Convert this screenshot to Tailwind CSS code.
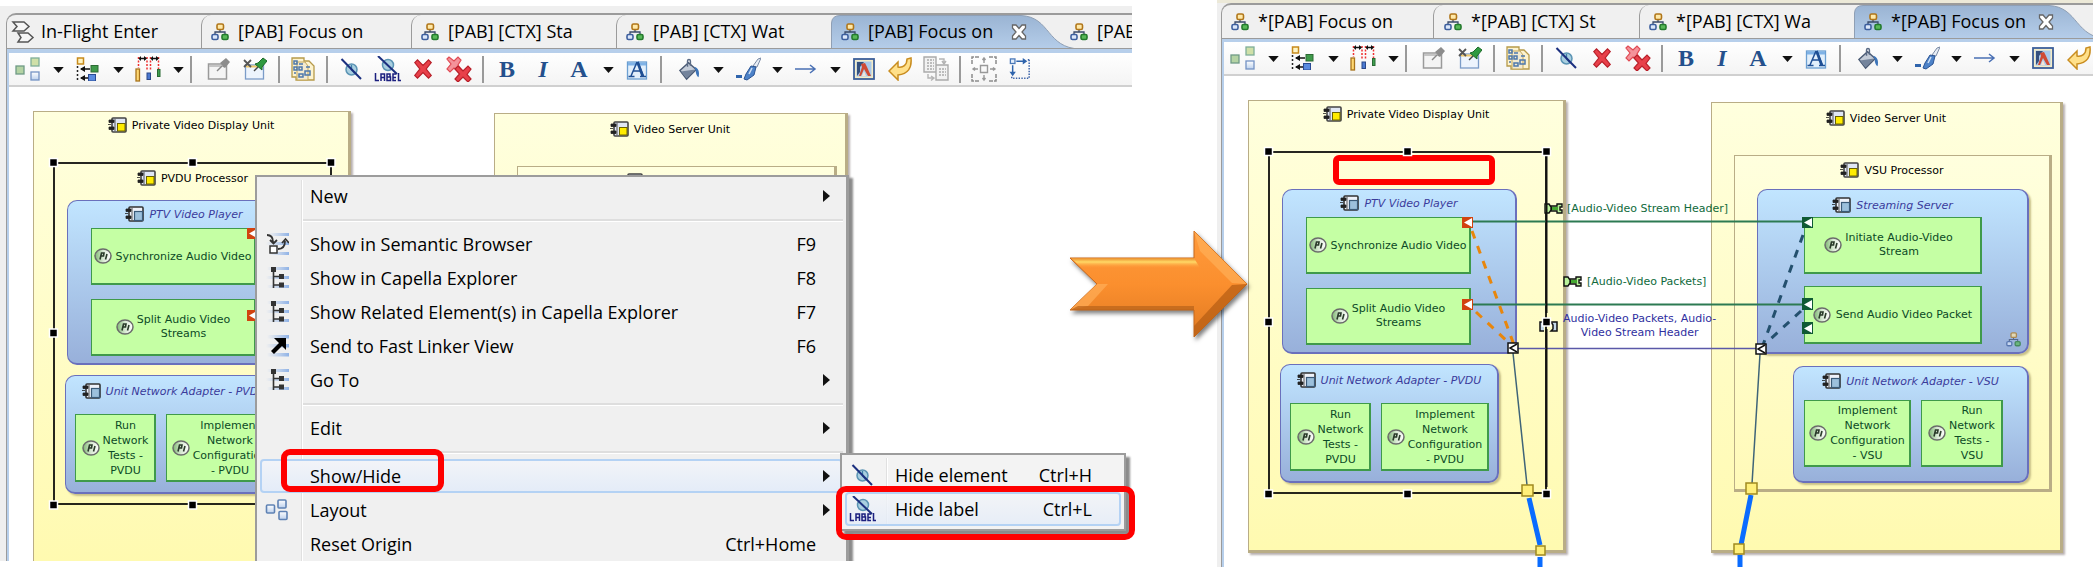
<!DOCTYPE html>
<html lang="en">
<head>
<meta charset="utf-8">
<title>Show/Hide label in diagrams</title>
<script src="https://cdn.jsdelivr.net/npm/@tailwindcss/browser@4"></script>
</head>
<body class="bg-white font-['Open_Sans','Noto_Sans',sans-serif] text-[18px] text-black">

<!-- Icon library -->
<svg class="absolute size-0" aria-hidden="true">
  <defs>
    <linearGradient id="tabBlue" x1="0" y1="0" x2="0" y2="1"><stop offset="0" stop-color="#9ab4d3"/><stop offset="1" stop-color="#b7cfeb"/></linearGradient>
    <linearGradient id="orange" x1="0" y1="0" x2="0" y2="1"><stop offset="0" stop-color="#ff9a3c"/><stop offset=".5" stop-color="#fb8f2e"/><stop offset="1" stop-color="#e07a22"/></linearGradient>
    <linearGradient id="topLight" x1="0" y1="0" x2="0" y2="1"><stop offset="0" stop-color="#e98a2b"/><stop offset=".4" stop-color="#ffd966"/><stop offset="1" stop-color="#ff9a3c" stop-opacity="0"/></linearGradient>
    <linearGradient id="fnFill" x1="0" x2="1"><stop offset="0" stop-color="#7fb873"/><stop offset=".5" stop-color="#d7e8d2"/><stop offset="1" stop-color="#fff"/></linearGradient>
    <linearGradient id="streak" x1="0" x2="1"><stop offset="0" stop-color="#9dbbe8" stop-opacity="0"/><stop offset="1" stop-color="#8fb2e6"/></linearGradient>
    <linearGradient id="blueSq" x1="0" y1="0" x2="0" y2="1"><stop offset="0" stop-color="#fff"/><stop offset="1" stop-color="#bcd0ec"/></linearGradient>
  </defs>
  <symbol id="i-tree" viewBox="0 0 18 18"><path d="M9 6v3M4 12V9h10v3" fill="none" stroke="#3a4a6a" stroke-width="1.3"/><rect x="6" y="1" width="6.500" height="5.500" rx="1.500" fill="#ffe9a8" stroke="#b0761a" stroke-width="1.600"/><rect x="1" y="11.500" width="6" height="5" rx="1.500" fill="#dbe7fa" stroke="#3d5f9e" stroke-width="1.600"/><rect x="11" y="11.500" width="6" height="5" rx="1.500" fill="#58b858" stroke="#237a2c" stroke-width="1.600"/></symbol>
  <symbol id="i-scenario" viewBox="0 0 24 24"><path d="M2 2h11l5 4.500-5 4.500H2l4-4.500zM7 13h10l5 4.500-5 4.500H7l3-4.500z" fill="#f6f6f6" stroke="#555" stroke-width="1.500"/></symbol>
  <symbol id="i-close" viewBox="0 0 16 16"><path d="M1.500 1h3.500l3 3.500L11 1h3.500v3L11 8l3.500 4v3H11L8 11.500 5 15H1.500v-3L5 8 1.500 4z" fill="#fff" stroke="#666" stroke-width="1.300"/></symbol>
  <symbol id="i-caret" viewBox="0 0 12 8"><path d="M0 1h12L6 8z" fill="#111"/></symbol>
  <symbol id="i-arrange" viewBox="0 0 26 24"><rect x="1" y="9" width="8" height="8" fill="#b4d3a4" stroke="#6f9a86" stroke-width="1.300"/><rect x="16" y="1" width="8" height="8" fill="#cfe0a8" stroke="#7fae98" stroke-width="1.300"/><rect x="16" y="15" width="8" height="8" fill="url(#blueSq)" stroke="#7392c4" stroke-width="1.300"/></symbol>
  <symbol id="i-align" viewBox="0 0 24 24"><rect x="1.500" y="1" width="6" height="6" fill="#fff5c4" stroke="#c78a1c" stroke-width="1.500"/><path d="M1.500 9v15" stroke="#222" stroke-width="1.500" stroke-dasharray="2 2"/><path d="M5 12h9M5 21h7" stroke="#111" stroke-width="1.500"/><path d="M9 9v6l-5-3zM9 18v6l-5-3z" fill="#111"/><rect x="15" y="8.500" width="7" height="6.500" fill="#3f9a4a" stroke="#2c6a34"/><rect x="12.500" y="17.500" width="7" height="6.500" fill="#5a8be0" stroke="#2a4a94"/></symbol>
  <symbol id="i-distribute" viewBox="0 0 26 26"><path d="M3.500 1v11M12 1v14M15.500 1v14M23.500 1v12" stroke="#f03030" stroke-width="1.500" stroke-dasharray="2 1.500"/><path d="M4 2.500h7M16 2.500h7" stroke="#111" stroke-width="1.500"/><path d="M9 0v5l3-2.500zM6 0v5L3.500 2.500zM21 0v5l3-2.500zM18 0v5l-2.500-2.500z" fill="#111"/><rect x="1" y="13" width="3.500" height="12" fill="#ffd873" stroke="#a8741c" stroke-width="1.300"/><rect x="12" y="17" width="3.500" height="6.500" fill="#4a78d0" stroke="#2b4888"/><rect x="22.500" y="13.500" width="2.500" height="7" fill="#3fa050" stroke="#2a6a34"/></symbol>
  <symbol id="i-pin" viewBox="0 0 24 24"><rect x="1.500" y="7" width="18" height="15" fill="#f4f4f4" stroke="#9a9a9a" stroke-width="1.500"/><path d="M2 9h17" stroke="#c4c4c4" stroke-width="2"/><path d="M10 14l5-5" stroke="#888" stroke-width="1.500"/><path d="M13 6l6-5 4 4-5 6-2-1-1-2z" fill="#8c8c8c"/></symbol>
  <symbol id="i-unpin" viewBox="0 0 24 24"><rect x="2.500" y="8" width="18" height="14" fill="#edf4fd" stroke="#7b9cc8" stroke-width="1.300"/><path d="M3 9.500h17" stroke="#f0c96a" stroke-width="2"/><path d="M1 3l7 7M8 3l-7 7" stroke="#555" stroke-width="1.800"/><path d="M11 14l4-4" stroke="#444" stroke-width="1.500"/><path d="M12 7l3-1 5-5 4 3-5 6v3z" fill="#2f9a40" stroke="#1d6a2a"/></symbol>
  <symbol id="i-layers" viewBox="0 0 24 24"><path d="M1 1h12v3h5l5 5v14H5v-3H1z" fill="#fdf3cf" stroke="#b69a4a" stroke-width="1.300"/><path d="M6 5h8l3 4v14H6z" fill="#f3ead0" stroke="#c5a95c"/><path d="M3 4h3v3H3zM8 7h4M3 10h3v3H3zM8 10h3v3H8zM3 16h2M8 17h4v3H8zM14 14h5v4h-5zM15 10h4" fill="none" stroke="#4d78ac" stroke-width="1.500"/></symbol>
  <symbol id="i-hide" viewBox="0 0 24 24"><circle cx="12.500" cy="12.500" r="5.500" fill="#a9cfe0" stroke="#5b94b4" stroke-width="1.500"/><path d="M12.500 8v5l3 3" stroke="#3d7fa8" fill="none" stroke-width="1.300"/><path d="M2.500 2l19.500 20" stroke="#1b2f7f" stroke-width="2"/></symbol>
  <symbol id="i-hidelabel" viewBox="0 0 27 26"><circle cx="14" cy="9" r="5.500" fill="#a9cfe0" stroke="#5b94b4" stroke-width="1.500"/><path d="M4 0l19 18" stroke="#1b2f7f" stroke-width="2"/><path d="M1.500 17v7.500h3.500M7 25v-7h3.500v7M7 21.500h3.500M13 18h3v3h-3zM13 21h3.500v3.500H13zM22 18h-3v6.500h3M19 21.500h3M24.500 17v7.500h2.500" fill="none" stroke="#1b1f7f" stroke-width="1.500"/></symbol>
  <symbol id="i-x" viewBox="0 0 24 24"><path d="M3 5l3-3 6 6 6-6 3 3-5.500 7 5.500 7-3 3-6-6-6 6-3-3 5.500-7z" fill="#e8404a" stroke="#b8202a" stroke-width="1.300"/></symbol>
  <symbol id="i-xx" viewBox="0 0 26 26"><path d="M1 3l2-2 5 4 4-4 3 3-3 5 4 5-3 2-5-4-4 4-3-3 4-5z" fill="#f4929a" stroke="#e04a54" stroke-width="1.200"/><path d="M9 13l3-3 5 5 5-5 3 3-4 5.500 4 4.500-3 3-5-5-5 5-3-3 4.500-5z" fill="#e8404a" stroke="#b8202a" stroke-width="1.200"/></symbol>
  <symbol id="i-fontbox" viewBox="0 0 22 24"><rect x="1.500" y="5" width="19" height="17" fill="#e2effb" stroke="#6b9fd2" stroke-width="1.300"/><path d="M2 7h18" stroke="#7fb2e6" stroke-width="3"/><path d="M5 19L11 5M12 5l5.500 14M7.500 14h8M2.500 19.500h6M14 19.500h6" fill="none" stroke="#1f4f94" stroke-width="1.500"/><path d="M11.500 5l5 14" stroke="#1f4f94" stroke-width="2.500"/></symbol>
  <symbol id="i-bucket" viewBox="0 0 24 24"><path d="M3 13l9-8 8 7-10 10z" fill="#c4ccd8" stroke="#4a5a74" stroke-width="1.500"/><path d="M4 14l15-2-9 9z" fill="#74849c"/><path d="M11 9V3c0-2 3-2 3 0v5" fill="none" stroke="#5a6a84" stroke-width="1.500"/><path d="M18 9c4 1 6 5 4.500 11-2-1-3-4-3-7z" fill="#3d74b8"/></symbol>
  <symbol id="i-brush" viewBox="0 0 26 24"><path d="M1 18h6v3H1z" fill="#2f64ac"/><path d="M18 9l5-7 3-1-4 9z" fill="#e8eef6" stroke="#7a8aa4"/><path d="M11 17l5-8 5 1-2 8-7 5-3-1z" fill="#4d82c8" stroke="#2b5494"/><path d="M14 17l3-6" stroke="#cfe0f4" stroke-width="1.500"/></symbol>
  <symbol id="i-line" viewBox="0 0 22 12"><path d="M0 6h20M15 2l5 4-5 4" fill="none" stroke="#4a70b4" stroke-width="1.500"/></symbol>
  <symbol id="i-image" viewBox="0 0 22 22"><rect x="1" y="1" width="20" height="20" fill="#f4ecc8" stroke="#3c5f9a" stroke-width="1.800"/><rect x="3.500" y="3.500" width="15" height="15" fill="#a9c9ea"/><path d="M4 4h7L7 9v5l-3 4z" fill="#34507e"/><path d="M8 6l4-1 2 4 4 9h-3l-4-7-3 7H6l3-9z" fill="#d04a34"/><path d="M11 13l-2 5h4z" fill="#f4e4d8"/></symbol>
  <symbol id="i-back" viewBox="0 0 24 24"><path d="M1 14l9-9v5c5 1 9-2 9-8l4-1c1 10-3 16-13 17v5z" fill="#ffe08a" stroke="#c98d20" stroke-width="1.500"/></symbol>
  <symbol id="i-copy" viewBox="0 0 26 26"><path d="M1 1h12v15H1zM13 9h12v15H13z" fill="#f2f2f2" stroke="#aaa" stroke-width="1.400"/><path d="M4 4h7M4 7h7M4 10h7M4 13h7M16 13h7M16 16h7M16 19h7" stroke="#aaa" stroke-width="1.500" stroke-dasharray="2 1"/><path d="M16 3h5v4M19 5l2 3 2-3M5 18v4h5M8 20l3 2-3 2.500" fill="none" stroke="#b4b4b4" stroke-width="1.400"/></symbol>
  <symbol id="i-fit" viewBox="0 0 26 26"><path d="M1 8V1h7M18 1h7v7M25 18v7h-7M8 25H1v-7" fill="none" stroke="#8c8c8c" stroke-width="1.500" stroke-dasharray="4 1"/><path d="M9.500 9.500h7v7h-7zM13 2v5M13 19v5M2 13h5M19 13h5M11.500 4L13 2l1.500 2M11.500 22l1.500 2 1.500-2M4 11.500L2 13l2 1.500M22 11.500l2 1.500-2 1.500" fill="none" stroke="#999" stroke-width="1.400"/></symbol>
  <symbol id="i-size" viewBox="0 0 24 24"><path d="M8 3.500h9M4 8v9" stroke="#2f64ac" stroke-width="1.600"/><path d="M15 0l5 3.500L15 7zM0.500 15h7L4 20z" fill="#2f64ac"/><rect x="1.500" y="1" width="5" height="5" fill="#e4eefb" stroke="#4a78b8" stroke-width="1.400"/><path d="M22 2v20H3M22 2h-3M3 22v-3" fill="none" stroke="#3a62a8" stroke-width="1.600" stroke-dasharray="1.500 1.500"/></symbol>
  <symbol id="i-comp-y" viewBox="0 0 19 16"><rect x="4" y="1" width="14" height="14" rx="1" fill="#dfe6f4" stroke="#444" stroke-width="1.600"/><path d="M7 2v12" stroke="#555" stroke-width="1"/><rect x="9.500" y="6.500" width="7.500" height="7.500" fill="#ffec00" stroke="#6a6200" stroke-width="1"/><path d="M1 3h5v2.500H1zM1 10h5v2.500H1zM0 7.500h3" fill="#222" stroke="#222" stroke-width=".8"/></symbol>
  <symbol id="i-comp-b" viewBox="0 0 19 16"><rect x="4" y="1" width="14" height="14" rx="1" fill="#eef2fa" stroke="#333" stroke-width="1.600"/><path d="M7 2v12" stroke="#555" stroke-width="1"/><rect x="9.500" y="5.500" width="8" height="9" fill="#9cc0dc" stroke="#3a5a78" stroke-width="1.200"/><path d="M1 3h5v2.500H1zM1 10h5v2.500H1zM0 7.500h3" fill="#222" stroke="#222" stroke-width=".8"/></symbol>
  <symbol id="i-fn" viewBox="0 0 18 16"><ellipse cx="9" cy="8" rx="8" ry="7" fill="url(#fnFill)" stroke="#6b6b6b" stroke-width="1.500"/><path d="M6 11.500L7.500 5h2.500l-.5 3H7M11.500 11.500L13 6" fill="none" stroke="#2a3a2a" stroke-width="1.600"/></symbol>
  <symbol id="i-exch" viewBox="0 0 19 11"><path d="M1 1h4l3 4.500L5 10H1zM18 1h-5v2H7v5h6v2h5V7h-2V4h2z" fill="#b8f09a" stroke="#111" stroke-width="1.400"/><path d="M8 4h6v3H8z" fill="#45a832"/></symbol>
  <symbol id="i-sembrowser" viewBox="0 0 24 24"><rect x="4" y="1" width="20" height="3" fill="url(#streak)"/><rect x="1" y="10" width="23" height="3" fill="url(#streak)"/><rect x="4" y="20" width="20" height="3" fill="url(#streak)"/><rect x="5" y="14" width="7" height="7" fill="#fff" stroke="#333" stroke-width="1.500"/><path d="M2 3c5 0 6 3 6 7M5 8l3.500 3.500L12 8M13 17c5 0 7-3 7-8M17 11l3.500-4L24 11" fill="none" stroke="#333" stroke-width="1.800"/></symbol>
  <symbol id="i-explorer" viewBox="0 0 24 24"><rect x="2" y="1" width="22" height="3" fill="url(#streak)"/><rect x="1" y="10" width="23" height="3" fill="url(#streak)"/><rect x="2" y="19" width="22" height="3" fill="url(#streak)"/><path d="M8.500 4v18M8.500 10.500h7M8.500 19h7" stroke="#333" stroke-width="1.600" fill="none"/><path d="M6 1h5v5H6zM14 8h5v5h-5zM14 16.500h5v5h-5z" fill="#333"/></symbol>
  <symbol id="i-linker" viewBox="0 0 24 24"><rect x="2" y="1" width="22" height="3.500" fill="url(#streak)"/><rect x="1" y="10" width="23" height="3.500" fill="url(#streak)"/><rect x="2" y="19" width="22" height="3.500" fill="url(#streak)"/><path d="M9 4h12v12l-4-4-8 8-3-3 8-8z" fill="#000"/></symbol>
  <symbol id="i-layout" viewBox="0 0 24 24"><g fill="url(#blueSq)" stroke="#5f82b4" stroke-width="1.600"><rect x="1.500" y="7" width="8" height="8" rx="1"/><rect x="13" y="2" width="8" height="8" rx="1"/><rect x="14" y="13.500" width="8" height="8" rx="1"/></g></symbol>
  <symbol id="i-sub" viewBox="0 0 7 12"><path d="M0 0l7 6-7 6z" fill="#111"/></symbol>
</svg>

<main class="relative grid h-screen grid-cols-[1132fr_85fr_876fr] overflow-hidden">

  <!-- Before: context menu open -->
  <section class="relative mb-[6px] flex flex-col overflow-hidden bg-[#efefef] pl-[6px]">
    <div class="-ml-[6px] h-[6px] shrink-0 bg-white"></div>
    <div class="h-[7px] shrink-0"></div>
    <div role="tablist" class="flex h-[36px] shrink-0 overflow-hidden rounded-tl-[10px] border-t-2 border-b border-l border-[#9b9b9b] bg-[#f0f0f0] whitespace-nowrap">
      <button role="tab" class="flex w-[194px] items-center gap-[6px] pl-[4px]"><svg class="size-[24px]"><use href="#i-scenario"/></svg><span>In-Flight Enter</span></button>
      <button role="tab" class="flex w-[210px] items-center gap-[9px] rounded-tl-[10px] border-l border-[#9b9b9b] pl-[9px]"><svg class="size-[18px]"><use href="#i-tree"/></svg><span>[PAB] Focus on</span></button>
      <button role="tab" class="flex w-[205px] items-center gap-[9px] rounded-tl-[10px] border-l border-[#9b9b9b] pl-[9px]"><svg class="size-[18px]"><use href="#i-tree"/></svg><span>[PAB] [CTX] Sta</span></button>
      <button role="tab" class="flex w-[215px] items-center gap-[9px] rounded-tl-[10px] border-l border-[#9b9b9b] pl-[9px]"><svg class="size-[18px]"><use href="#i-tree"/></svg><span>[PAB] [CTX] Wat</span></button>
      <button role="tab" aria-selected="true" class="relative flex w-[230px] items-center gap-[9px] pl-[10px]">
        <svg class="absolute left-0 top-0 h-[34px] w-[250px]" viewBox="0 0 250 34"><path d="M.5 35V8Q1 .5 9 .5H190C220 2 215 33 249 34V36z" fill="url(#tabBlue)" stroke="#8f9fb4"/></svg>
        <svg class="relative size-[18px]"><use href="#i-tree"/></svg><span class="relative w-[134px] text-left">[PAB] Focus on</span><svg class="relative size-[16px]"><use href="#i-close"/></svg></button>
      <button role="tab" class="relative flex flex-1 items-center gap-[9px] overflow-hidden pl-[9px]"><svg class="size-[18px] shrink-0"><use href="#i-tree"/></svg><span>[PAB]</span></button>
    </div>
    <div class="flex min-h-0 flex-1 flex-col border-l border-[#9b9b9b]">
      <div class="h-[4px] shrink-0 bg-[#b7cfeb]"></div>
      <div class="flex min-h-0 flex-1 flex-col border-l-2 border-[#b7cfeb]">
        <div role="toolbar" class="flex h-[34px] shrink-0 items-center border-b-2 border-[#d0d0d0] bg-gradient-to-b from-white to-[#f4f4f4] pl-px font-['Liberation_Serif',serif] text-[24px] leading-none text-[#24508c]">
          <button aria-label="Arrange" class="flex w-[36px] justify-center"><svg class="h-[24px] w-[26px]"><use href="#i-arrange"/></svg></button><button aria-label="Arrange options" class="flex w-[24px] justify-center"><svg class="h-[7px] w-[11px]"><use href="#i-caret"/></svg></button>
          <button aria-label="Align" class="flex w-[36px] justify-center"><svg class="size-[24px]"><use href="#i-align"/></svg></button><button aria-label="Align options" class="flex w-[24px] justify-center"><svg class="h-[7px] w-[11px]"><use href="#i-caret"/></svg></button>
          <button aria-label="Distribute" class="flex w-[36px] justify-center"><svg class="size-[26px]"><use href="#i-distribute"/></svg></button><button aria-label="Distribute options" class="flex w-[24px] justify-center"><svg class="h-[7px] w-[11px]"><use href="#i-caret"/></svg></button>
          <span class="mr-[9px] h-[27px] w-[2px] bg-[#9a9a9a]"></span>
          <button aria-label="Pin" class="flex w-[36px] justify-center"><svg class="size-[24px]"><use href="#i-pin"/></svg></button>
          <button aria-label="Unpin" class="flex w-[36px] justify-center"><svg class="size-[24px]"><use href="#i-unpin"/></svg></button>
          <span class="mx-[5px] h-[27px] w-[2px] bg-[#9a9a9a]"></span>
          <button aria-label="Layers" class="flex w-[36px] justify-center"><svg class="size-[24px]"><use href="#i-layers"/></svg></button>
          <span class="mx-[5px] h-[27px] w-[2px] bg-[#9a9a9a]"></span>
          <button aria-label="Hide element" class="flex w-[36px] justify-center"><svg class="size-[24px]"><use href="#i-hide"/></svg></button>
          <button aria-label="Hide label" class="flex w-[36px] justify-center"><svg class="h-[26px] w-[27px]"><use href="#i-hidelabel"/></svg></button>
          <button aria-label="Delete from diagram" class="flex w-[36px] justify-center"><svg class="size-[22px]"><use href="#i-x"/></svg></button>
          <button aria-label="Delete from model" class="flex w-[36px] justify-center"><svg class="size-[26px]"><use href="#i-xx"/></svg></button>
          <span class="mx-[5px] h-[27px] w-[2px] bg-[#9a9a9a]"></span>
          <button class="w-[36px] font-bold">B</button>
          <button class="w-[36px] font-bold italic">I</button>
          <button class="w-[36px] font-bold">A</button><button aria-label="Font colour" class="flex w-[22px] justify-center"><svg class="h-[7px] w-[11px]"><use href="#i-caret"/></svg></button>
          <button aria-label="Font" class="flex w-[36px] justify-center"><svg class="h-[24px] w-[22px]"><use href="#i-fontbox"/></svg></button>
          <span class="mr-[8px] ml-[5px] h-[27px] w-[2px] bg-[#9a9a9a]"></span>
          <button aria-label="Fill" class="flex w-[36px] justify-center"><svg class="size-[23px]"><use href="#i-bucket"/></svg></button><button aria-label="Fill options" class="flex w-[24px] justify-center"><svg class="h-[7px] w-[11px]"><use href="#i-caret"/></svg></button>
          <button aria-label="Line colour" class="flex w-[36px] justify-center"><svg class="h-[24px] w-[26px]"><use href="#i-brush"/></svg></button><button aria-label="Line colour options" class="flex w-[22px] justify-center"><svg class="h-[7px] w-[11px]"><use href="#i-caret"/></svg></button>
          <button aria-label="Line style" class="flex w-[36px] justify-center"><svg class="h-[12px] w-[22px]"><use href="#i-line"/></svg></button><button aria-label="Line style options" class="flex w-[22px] justify-center"><svg class="h-[7px] w-[11px]"><use href="#i-caret"/></svg></button>
          <button aria-label="Image" class="flex w-[36px] justify-center"><svg class="size-[22px]"><use href="#i-image"/></svg></button>
          <button aria-label="Reset style" class="flex w-[36px] justify-center"><svg class="size-[24px]"><use href="#i-back"/></svg></button>
          <button aria-label="Copy format" class="flex w-[36px] justify-center"><svg class="size-[26px]"><use href="#i-copy"/></svg></button>
          <span class="mx-[5px] h-[27px] w-[2px] bg-[#9a9a9a]"></span>
          <button aria-label="Auto size" class="flex w-[36px] justify-center"><svg class="size-[26px]"><use href="#i-fit"/></svg></button>
          <button aria-label="Same size" class="flex w-[36px] justify-center"><svg class="size-[22px]"><use href="#i-size"/></svg></button>
        </div>

        <!-- Diagram canvas -->
        <div class="relative min-h-0 flex-1 overflow-hidden bg-white font-['DejaVu_Sans',sans-serif] text-[11px] leading-[15px]">
          <div class="absolute left-[24px] top-[24px] h-[453px] w-[318px] border border-r-[3px] border-b-[3px] border-[#b9ad86] bg-gradient-to-b from-[#ffffde] to-[#fffab0] shadow-[2px_2px_2px_#b8b0b0]">
            <div class="mt-[5px] flex items-center justify-center gap-[5px]"><svg class="h-[16px] w-[19px]"><use href="#i-comp-y"/></svg><span>Private Video Display Unit</span></div>
          </div>
          <div class="absolute left-[44px] top-[75px] h-[343px] w-[279px] border-2 border-black/85">
            <div class="mt-[6px] flex items-center justify-center gap-[5px]"><svg class="h-[16px] w-[19px]"><use href="#i-comp-y"/></svg><span>PVDU Processor</span></div>
          </div>
          <div class="absolute left-[58px] top-[113px] h-[165px] w-[235px] rounded-[10px] border border-r-2 border-b-2 border-[#6a70bc] bg-gradient-to-b from-[#c1e5ff] to-[#98b0da]">
            <div class="mt-[5px] flex items-center justify-center gap-[5px] text-[#3b3b9b] italic"><svg class="h-[16px] w-[19px]"><use href="#i-comp-b"/></svg><span>PTV Video Player</span></div>
          </div>
          <div class="absolute left-[82px] top-[141px] flex h-[57px] w-[165px] items-center justify-center gap-[3px] border border-r-2 border-b-2 border-[#3f9a4a] bg-[#c5ffa4] text-[#0c4a26]"><svg class="h-[16px] w-[18px] shrink-0"><use href="#i-fn"/></svg><span>Synchronize Audio Video</span></div>
          <div class="absolute left-[82px] top-[212px] flex h-[57px] w-[165px] items-center justify-center gap-[3px] border border-r-2 border-b-2 border-[#3f9a4a] bg-[#c5ffa4] text-[#0c4a26]"><svg class="h-[16px] w-[18px] shrink-0"><use href="#i-fn"/></svg><span class="text-center leading-[14px]">Split Audio Video<br>Streams</span></div>
          <svg class="absolute left-[238px] top-[141px] size-[11px]" viewBox="0 0 11 11"><path d="M0 0h11v11H0z" fill="#d2430f"/><path d="M10 1v9L2 5.500z" fill="#fff"/></svg>
          <svg class="absolute left-[238px] top-[223px] size-[11px]" viewBox="0 0 11 11"><path d="M0 0h11v11H0z" fill="#d2430f"/><path d="M10 1v9L2 5.500z" fill="#fff"/></svg>
          <div class="absolute left-[56px] top-[288px] h-[119px] w-[219px] rounded-[10px] border border-r-2 border-b-2 border-[#6a70bc] bg-gradient-to-b from-[#c1e5ff] to-[#98b0da] shadow-[2px_2px_2px_#c8c088]">
            <div class="mt-[7px] flex items-center justify-center gap-[5px] whitespace-nowrap text-[#3b3b9b] italic"><svg class="h-[16px] w-[19px] shrink-0"><use href="#i-comp-b"/></svg><span>Unit Network Adapter - PVDU</span></div>
          </div>
          <div class="absolute left-[66px] top-[327px] flex h-[68px] w-[81px] items-center justify-center gap-[3px] border border-r-2 border-b-2 border-[#3f9a4a] bg-[#c5ffa4] text-[#0c4a26]"><svg class="h-[16px] w-[18px] shrink-0"><use href="#i-fn"/></svg><span class="text-center">Run<br>Network<br>Tests -<br>PVDU</span></div>
          <div class="absolute left-[157px] top-[327px] flex h-[68px] w-[108px] items-center justify-center gap-[3px] border border-r-2 border-b-2 border-[#3f9a4a] bg-[#c5ffa4] text-[#0c4a26]"><svg class="h-[16px] w-[18px] shrink-0"><use href="#i-fn"/></svg><span class="text-center">Implement<br>Network<br>Configuration<br>- PVDU</span></div>
          <svg class="absolute left-[36px] top-[67px] h-[360px] w-[296px]"><g fill="#000" stroke="#fff" stroke-width="1.500"><rect x="4.500" y="4.500" width="8" height="8"/><rect x="143.500" y="4.500" width="8" height="8"/><rect x="282" y="4.500" width="8" height="8"/><rect x="4.500" y="175" width="8" height="8"/><rect x="4.500" y="347" width="8" height="8"/><rect x="143.500" y="347" width="8" height="8"/></g></svg>
          <div class="absolute left-[485px] top-[26px] h-[451px] w-[354px] border border-r-[3px] border-b-[3px] border-[#b9ad86] bg-gradient-to-b from-[#ffffde] to-[#fffab0] shadow-[2px_2px_2px_#b8b0b0]">
            <div class="mt-[7px] flex items-center justify-center gap-[5px]"><svg class="h-[16px] w-[19px]"><use href="#i-comp-y"/></svg><span>Video Server Unit</span></div>
          </div>
          <div class="absolute left-[508px] top-[79px] h-[336px] w-[320px] border border-r-[3px] border-b-[3px] border-[#b9ad86] bg-gradient-to-b from-[#ffffde] to-[#fffab0]">
            <div class="mt-[6px] flex items-center justify-center gap-[5px]"><svg class="h-[16px] w-[19px]"><use href="#i-comp-y"/></svg><span>VSU Processor</span></div>
          </div>
        </div>
      </div>
    </div>

    <!-- Context menu -->
    <div role="menu" class="absolute left-[255px] top-[175px] h-[400px] w-[594px] border-2 border-r-[3px] border-[#9c9c9c] bg-[#f0f0f0] pt-[2px] pr-[3px] pl-[3px] shadow-[4px_3px_2px_#8b8b8b]">
      <div class="absolute top-[3px] bottom-0 left-[44px] w-[2px] border-l border-[#e0e0e0] bg-white"></div>
      <button role="menuitem" class="relative flex h-[34px] w-full items-center pr-[13px] pl-[50px]"><span class="flex-1 text-left">New</span><svg class="h-[12px] w-[7px]"><use href="#i-sub"/></svg></button>
      <div class="flex h-[14px] items-center pl-[43px]"><hr class="w-full border-t-2 border-b border-t-[#dedede] border-b-white"></div>
      <button role="menuitem" class="relative flex h-[34px] w-full items-center gap-[21px] pr-[27px] pl-[5px]"><svg class="size-[24px]"><use href="#i-sembrowser"/></svg><span class="flex-1 text-left">Show in Semantic Browser</span><span>F9</span></button>
      <button role="menuitem" class="relative flex h-[34px] w-full items-center gap-[21px] pr-[27px] pl-[5px]"><svg class="size-[24px]"><use href="#i-explorer"/></svg><span class="flex-1 text-left">Show in Capella Explorer</span><span>F8</span></button>
      <button role="menuitem" class="relative flex h-[34px] w-full items-center gap-[21px] pr-[27px] pl-[5px]"><svg class="size-[24px]"><use href="#i-explorer"/></svg><span class="flex-1 text-left">Show Related Element(s) in Capella Explorer</span><span>F7</span></button>
      <button role="menuitem" class="relative flex h-[34px] w-full items-center gap-[21px] pr-[27px] pl-[5px]"><svg class="size-[24px]"><use href="#i-linker"/></svg><span class="flex-1 text-left">Send to Fast Linker View</span><span>F6</span></button>
      <button role="menuitem" class="relative flex h-[34px] w-full items-center gap-[21px] pr-[13px] pl-[5px]"><svg class="size-[24px]"><use href="#i-explorer"/></svg><span class="flex-1 text-left">Go To</span><svg class="h-[12px] w-[7px]"><use href="#i-sub"/></svg></button>
      <div class="flex h-[14px] items-center pl-[43px]"><hr class="w-full border-t-2 border-b border-t-[#dedede] border-b-white"></div>
      <button role="menuitem" class="relative flex h-[34px] w-full items-center pr-[13px] pl-[50px]"><span class="flex-1 text-left">Edit</span><svg class="h-[12px] w-[7px]"><use href="#i-sub"/></svg></button>
      <div class="flex h-[14px] items-center pl-[43px]"><hr class="w-full border-t-2 border-b border-t-[#dedede] border-b-white"></div>
      <button role="menuitem" aria-expanded="true" class="relative flex h-[34px] w-full items-center rounded-[4px] border-2 border-[#b4d2f4] bg-gradient-to-b from-[#f2f4f8] to-[#e4ecf8] pr-[11px] pl-[48px]"><span class="flex-1 text-left">Show/Hide</span><svg class="h-[12px] w-[7px]"><use href="#i-sub"/></svg></button>
      <button role="menuitem" class="relative flex h-[34px] w-full items-center gap-[21px] pr-[13px] pl-[5px]"><svg class="size-[24px]"><use href="#i-layout"/></svg><span class="flex-1 text-left">Layout</span><svg class="h-[12px] w-[7px]"><use href="#i-sub"/></svg></button>
      <button role="menuitem" class="relative flex h-[34px] w-full items-center pr-[27px] pl-[50px]"><span class="flex-1 text-left">Reset Origin</span><span>Ctrl+Home</span></button>
    </div>
    <div class="absolute left-[281px] top-[449px] h-[43px] w-[163px] rounded-[9px] border-[6px] border-[#ff0000]"></div>

    <!-- Show/Hide submenu -->
    <div role="menu" class="absolute left-[840px] top-[453px] w-[286px] border-2 border-[#9c9c9c] bg-[#f3f3f3] p-[3px] shadow-[4px_4px_2px_#8b8b8b]">
      <div class="absolute top-[3px] bottom-[3px] left-[44px] w-[2px] border-l border-[#e0e0e0] bg-white"></div>
      <button role="menuitem" class="relative flex h-[34px] w-full items-center pr-[29px] pl-[5px]"><svg class="mr-[21px] size-[24px]"><use href="#i-hide"/></svg><span class="flex-1 text-left">Hide element</span><span>Ctrl+H</span></button>
      <button role="menuitem" class="relative flex h-[34px] w-full items-center rounded-[4px] border-2 border-[#b4d2f4] bg-gradient-to-b from-[#f2f4f8]/80 to-[#e4ecf8]/80 pr-[27px] pl-[2px]"><svg class="mr-[19px] h-[26px] w-[27px]"><use href="#i-hidelabel"/></svg><span class="flex-1 text-left">Hide label</span><span>Ctrl+L</span></button>
    </div>
  </section>

  <div></div>

  <!-- After: label hidden -->
  <section class="relative flex flex-col overflow-hidden bg-[#efefef] pl-[4px]">
    <div class="-ml-[4px] h-[3px] shrink-0 bg-[#ece9d8]"></div>
    <div role="tablist" class="flex h-[36px] shrink-0 overflow-hidden rounded-tl-[10px] border-t-2 border-b border-l border-[#9b9b9b] bg-[#f0f0f0] whitespace-nowrap">
      <button role="tab" class="flex w-[211px] shrink-0 items-center gap-[9px] pl-[9px]"><svg class="size-[18px]"><use href="#i-tree"/></svg><span>*[PAB] Focus on</span></button>
      <button role="tab" class="flex w-[206px] shrink-0 items-center gap-[9px] rounded-tl-[10px] border-l border-[#9b9b9b] pl-[10px]"><svg class="size-[18px]"><use href="#i-tree"/></svg><span>*[PAB] [CTX] St</span></button>
      <button role="tab" class="flex w-[215px] shrink-0 items-center gap-[9px] rounded-tl-[10px] border-l border-[#9b9b9b] pl-[9px]"><svg class="size-[18px]"><use href="#i-tree"/></svg><span>*[PAB] [CTX] Wa</span></button>
      <button role="tab" aria-selected="true" class="relative flex w-[240px] shrink-0 items-center gap-[9px] pl-[10px]">
        <svg class="absolute left-0 top-0 h-[34px] w-[256px]" viewBox="0 0 256 34"><path d="M.5 35V8Q1 .5 9 .5H195C225 2 220 33 255 34V36z" fill="url(#tabBlue)" stroke="#8f9fb4"/></svg>
        <svg class="relative size-[18px]"><use href="#i-tree"/></svg><span class="relative w-[138px] text-left">*[PAB] Focus on</span><svg class="relative size-[16px]"><use href="#i-close"/></svg></button>
    </div>
    <div class="flex min-h-0 flex-1 flex-col border-l border-[#9b9b9b]">
      <div class="h-[3px] shrink-0 bg-[#b7cfeb]"></div>
      <div class="flex min-h-0 flex-1 flex-col border-l-2 border-[#b7cfeb]">
        <div role="toolbar" class="flex h-[34px] shrink-0 items-center overflow-hidden border-b-2 border-[#d0d0d0] bg-gradient-to-b from-white to-[#f4f4f4] pl-px font-['Liberation_Serif',serif] text-[24px] leading-none text-[#24508c] *:shrink-0">
          <button aria-label="Arrange" class="flex w-[36px] justify-center"><svg class="h-[24px] w-[26px]"><use href="#i-arrange"/></svg></button><button aria-label="Arrange options" class="flex w-[24px] justify-center"><svg class="h-[7px] w-[11px]"><use href="#i-caret"/></svg></button>
          <button aria-label="Align" class="flex w-[36px] justify-center"><svg class="size-[24px]"><use href="#i-align"/></svg></button><button aria-label="Align options" class="flex w-[24px] justify-center"><svg class="h-[7px] w-[11px]"><use href="#i-caret"/></svg></button>
          <button aria-label="Distribute" class="flex w-[36px] justify-center"><svg class="size-[26px]"><use href="#i-distribute"/></svg></button><button aria-label="Distribute options" class="flex w-[24px] justify-center"><svg class="h-[7px] w-[11px]"><use href="#i-caret"/></svg></button>
          <span class="mr-[9px] h-[27px] w-[2px] bg-[#9a9a9a]"></span>
          <button aria-label="Pin" class="flex w-[36px] justify-center"><svg class="size-[24px]"><use href="#i-pin"/></svg></button>
          <button aria-label="Unpin" class="flex w-[36px] justify-center"><svg class="size-[24px]"><use href="#i-unpin"/></svg></button>
          <span class="mx-[5px] h-[27px] w-[2px] bg-[#9a9a9a]"></span>
          <button aria-label="Layers" class="flex w-[36px] justify-center"><svg class="size-[24px]"><use href="#i-layers"/></svg></button>
          <span class="mx-[5px] h-[27px] w-[2px] bg-[#9a9a9a]"></span>
          <button aria-label="Hide element" class="flex w-[36px] justify-center"><svg class="size-[24px]"><use href="#i-hide"/></svg></button>
          <button aria-label="Delete from diagram" class="flex w-[36px] justify-center"><svg class="size-[22px]"><use href="#i-x"/></svg></button>
          <button aria-label="Delete from model" class="flex w-[36px] justify-center"><svg class="size-[26px]"><use href="#i-xx"/></svg></button>
          <span class="mx-[5px] h-[27px] w-[2px] bg-[#9a9a9a]"></span>
          <button class="w-[36px] font-bold">B</button>
          <button class="w-[36px] font-bold italic">I</button>
          <button class="w-[36px] font-bold">A</button><button aria-label="Font colour" class="flex w-[22px] justify-center"><svg class="h-[7px] w-[11px]"><use href="#i-caret"/></svg></button>
          <button aria-label="Font" class="flex w-[36px] justify-center"><svg class="h-[24px] w-[22px]"><use href="#i-fontbox"/></svg></button>
          <span class="mr-[8px] ml-[5px] h-[27px] w-[2px] bg-[#9a9a9a]"></span>
          <button aria-label="Fill" class="flex w-[36px] justify-center"><svg class="size-[23px]"><use href="#i-bucket"/></svg></button><button aria-label="Fill options" class="flex w-[24px] justify-center"><svg class="h-[7px] w-[11px]"><use href="#i-caret"/></svg></button>
          <button aria-label="Line colour" class="flex w-[36px] justify-center"><svg class="h-[24px] w-[26px]"><use href="#i-brush"/></svg></button><button aria-label="Line colour options" class="flex w-[22px] justify-center"><svg class="h-[7px] w-[11px]"><use href="#i-caret"/></svg></button>
          <button aria-label="Line style" class="flex w-[36px] justify-center"><svg class="h-[12px] w-[22px]"><use href="#i-line"/></svg></button><button aria-label="Line style options" class="flex w-[22px] justify-center"><svg class="h-[7px] w-[11px]"><use href="#i-caret"/></svg></button>
          <button aria-label="Image" class="flex w-[36px] justify-center"><svg class="size-[22px]"><use href="#i-image"/></svg></button>
          <button aria-label="Reset style" class="flex w-[36px] justify-center"><svg class="size-[24px]"><use href="#i-back"/></svg></button>
        </div>

        <!-- Diagram canvas -->
        <div class="relative min-h-0 flex-1 overflow-hidden bg-white font-['DejaVu_Sans',sans-serif] text-[11px] leading-[15px]">
          <div class="absolute left-[24px] top-[24px] h-[453px] w-[318px] border border-r-[3px] border-b-[3px] border-[#b9ad86] bg-gradient-to-b from-[#ffffde] to-[#fffab0] shadow-[2px_2px_2px_#b8b0b0]">
            <div class="mt-[5px] flex items-center justify-center gap-[5px]"><svg class="h-[16px] w-[19px]"><use href="#i-comp-y"/></svg><span>Private Video Display Unit</span></div>
          </div>
          <div class="absolute left-[44px] top-[75px] h-[343px] w-[279px] border-2 border-black/85"></div>
          <div class="absolute left-[109px] top-[79px] h-[30px] w-[162px] rounded-[6px] border-[6px] border-[#ff0000]"></div>
          <div class="absolute left-[58px] top-[113px] h-[165px] w-[235px] rounded-[10px] border border-r-2 border-b-2 border-[#6a70bc] bg-gradient-to-b from-[#c1e5ff] to-[#98b0da]">
            <div class="mt-[5px] flex items-center justify-center gap-[5px] text-[#3b3b9b] italic"><svg class="h-[16px] w-[19px]"><use href="#i-comp-b"/></svg><span>PTV Video Player</span></div>
          </div>
          <div class="absolute left-[82px] top-[141px] flex h-[57px] w-[165px] items-center justify-center gap-[3px] border border-r-2 border-b-2 border-[#3f9a4a] bg-[#c5ffa4] text-[#0c4a26]"><svg class="h-[16px] w-[18px] shrink-0"><use href="#i-fn"/></svg><span>Synchronize Audio Video</span></div>
          <div class="absolute left-[82px] top-[212px] flex h-[57px] w-[165px] items-center justify-center gap-[3px] border border-r-2 border-b-2 border-[#3f9a4a] bg-[#c5ffa4] text-[#0c4a26]"><svg class="h-[16px] w-[18px] shrink-0"><use href="#i-fn"/></svg><span class="text-center leading-[14px]">Split Audio Video<br>Streams</span></div>
          <div class="absolute left-[56px] top-[288px] h-[119px] w-[219px] rounded-[10px] border border-r-2 border-b-2 border-[#6a70bc] bg-gradient-to-b from-[#c1e5ff] to-[#98b0da] shadow-[2px_2px_2px_#c8c088]">
            <div class="mt-[7px] flex items-center justify-center gap-[5px] whitespace-nowrap text-[#3b3b9b] italic"><svg class="h-[16px] w-[19px] shrink-0"><use href="#i-comp-b"/></svg><span>Unit Network Adapter - PVDU</span></div>
          </div>
          <div class="absolute left-[66px] top-[327px] flex h-[68px] w-[81px] items-center justify-center gap-[3px] border border-r-2 border-b-2 border-[#3f9a4a] bg-[#c5ffa4] text-[#0c4a26]"><svg class="h-[16px] w-[18px] shrink-0"><use href="#i-fn"/></svg><span class="text-center">Run<br>Network<br>Tests -<br>PVDU</span></div>
          <div class="absolute left-[157px] top-[327px] flex h-[68px] w-[108px] items-center justify-center gap-[3px] border border-r-2 border-b-2 border-[#3f9a4a] bg-[#c5ffa4] text-[#0c4a26]"><svg class="h-[16px] w-[18px] shrink-0"><use href="#i-fn"/></svg><span class="text-center">Implement<br>Network<br>Configuration<br>- PVDU</span></div>

          <div class="absolute left-[487px] top-[26px] h-[451px] w-[352px] border border-r-[3px] border-b-[3px] border-[#b9ad86] bg-gradient-to-b from-[#ffffde] to-[#fffab0] shadow-[2px_2px_2px_#b8b0b0]">
            <div class="mt-[7px] flex items-center justify-center gap-[5px]"><svg class="h-[16px] w-[19px]"><use href="#i-comp-y"/></svg><span>Video Server Unit</span></div>
          </div>
          <div class="absolute left-[510px] top-[79px] h-[337px] w-[318px] border border-r-[3px] border-b-[3px] border-[#b9ad86] bg-gradient-to-b from-[#ffffde] to-[#fffab8]">
            <div class="mt-[6px] flex items-center justify-center gap-[5px]"><svg class="h-[16px] w-[19px]"><use href="#i-comp-y"/></svg><span>VSU Processor</span></div>
          </div>
          <div class="absolute left-[533px] top-[113px] h-[165px] w-[272px] rounded-[10px] border border-r-2 border-b-2 border-[#6a70bc] bg-gradient-to-b from-[#c1e5ff] to-[#98b0da] shadow-[2px_2px_2px_#c8c088]">
            <div class="mt-[7px] flex items-center justify-center gap-[5px] text-[#3b3b9b] italic"><svg class="h-[16px] w-[19px]"><use href="#i-comp-b"/></svg><span>Streaming Server</span></div>
          </div>
          <div class="absolute left-[580px] top-[141px] flex h-[57px] w-[178px] items-center justify-center gap-[3px] border border-r-2 border-b-2 border-[#3f9a4a] bg-[#c5ffa4] pr-[8px] text-[#0c4a26]"><svg class="h-[16px] w-[18px] shrink-0"><use href="#i-fn"/></svg><span class="text-center leading-[14px]">Initiate Audio-Video<br>Stream</span></div>
          <div class="absolute left-[580px] top-[210px] flex h-[58px] w-[178px] items-center justify-center gap-[5px] border border-r-2 border-b-2 border-[#3f9a4a] bg-[#c5ffa4] text-[#0c4a26]"><svg class="h-[16px] w-[18px] shrink-0"><use href="#i-fn"/></svg><span>Send Audio Video Packet</span></div>
          <svg class="absolute left-[782px] top-[256px] size-[15px] opacity-70"><use href="#i-tree"/></svg>
          <div class="absolute left-[569px] top-[290px] h-[117px] w-[236px] rounded-[10px] border border-r-2 border-b-2 border-[#6a70bc] bg-gradient-to-b from-[#c1e5ff] to-[#98b0da] shadow-[2px_2px_2px_#c8c088]">
            <div class="mt-[6px] flex items-center justify-center gap-[5px] whitespace-nowrap text-[#3b3b9b] italic"><svg class="h-[16px] w-[19px] shrink-0"><use href="#i-comp-b"/></svg><span>Unit Network Adapter - VSU</span></div>
          </div>
          <div class="absolute left-[580px] top-[324px] flex h-[67px] w-[107px] items-center justify-center gap-[3px] border border-r-2 border-b-2 border-[#3f9a4a] bg-[#c5ffa4] text-[#0c4a26]"><svg class="h-[16px] w-[18px] shrink-0"><use href="#i-fn"/></svg><span class="text-center">Implement<br>Network<br>Configuration<br>- VSU</span></div>
          <div class="absolute left-[697px] top-[324px] flex h-[67px] w-[82px] items-center justify-center gap-[3px] border border-r-2 border-b-2 border-[#3f9a4a] bg-[#c5ffa4] text-[#0c4a26]"><svg class="h-[16px] w-[18px] shrink-0"><use href="#i-fn"/></svg><span class="text-center">Run<br>Network<br>Tests -<br>VSU</span></div>

          <!-- Links and ports -->
          <svg class="absolute inset-0 h-full w-full" fill="none">
            <path d="M249 145.500H579M249 228.500H579" stroke="#2c7a52" stroke-width="2"/>
            <path d="M294 272.500H532" stroke="#5a58a8" stroke-width="1.500"/>
            <path d="M248 155l42 114M252 236l34 32" stroke="#e8860c" stroke-width="3" stroke-dasharray="8 8"/>
            <path d="M579 159l-40 110M577 235l-36 33" stroke="#24506e" stroke-width="3" stroke-dasharray="8 8"/>
            <path d="M289 277l14 132M536 278l-8 130" stroke="#3f6478" stroke-width="1.500"/>
            <path d="M305 422l11 47M316 481v10M527 419l-10 50M516 479v12" stroke="#0a6cff" stroke-width="5"/>
            <g fill="#fff07a" stroke="#a08a20" stroke-width="1.500"><rect x="298" y="409" width="11" height="11"/><rect x="312" y="470" width="9" height="9"/><rect x="522" y="407" width="11" height="11"/><rect x="510" y="468" width="10" height="10"/></g>
            <path d="M238 141h11v11h-11zM238 223h11v11h-11z" fill="#d2430f"/><path d="M248 142v9l-8-4.500zM248 224v9l-8-4.500z" fill="#fff"/>
            <path d="M578 141h11v11h-11zM578 222h11v12h-11zM578 246h11v12h-11z" fill="#0f5a34"/><path d="M588 142v9l-8-4.500zM588 224v9l-8-4.500zM588 248v9l-8-4.500z" fill="#fff"/>
            <g fill="#fff" stroke="#111" stroke-width="1.500"><path d="M284 267h10v10h-10zM532 268h10v10h-10z"/><path d="M293 268l-7 4 7 4M541 269l-7 4 7 4"/></g>
          </svg>
          <div class="absolute left-[320px] top-[125px] flex items-center gap-[4px] whitespace-nowrap text-[#0f6a3c]"><svg class="h-[11px] w-[19px]"><use href="#i-exch"/></svg><span>[Audio-Video Stream Header]</span></div>
          <div class="absolute left-[339px] top-[198px] flex items-center gap-[5px] whitespace-nowrap text-[#0f6a3c]"><svg class="h-[11px] w-[19px]"><use href="#i-exch"/></svg><span>[Audio-Video Packets]</span></div>
          <div class="absolute left-[315px] top-[236px] flex items-center gap-[5px] whitespace-nowrap text-[#3030a0]"><svg class="h-[11px] w-[19px]" viewBox="0 0 19 11"><path d="M5 1H1v9h4M12 1h6v9h-6l2-2V4z" fill="#c8dcec" stroke="#111" stroke-width="1.500"/></svg><span class="text-center leading-[14px]">Audio-Video Packets, Audio-<br>Video Stream Header</span></div>
          <svg class="absolute left-[36px] top-[67px] h-[360px] w-[296px]"><path d="M286.500 12V170M286.500 186V344" stroke="#111" stroke-width="2"/><g fill="#000" stroke="#fff" stroke-width="1.500"><rect x="4.500" y="4.500" width="8" height="8"/><rect x="143.500" y="4.500" width="8" height="8"/><rect x="282.500" y="4.500" width="8" height="8"/><rect x="4.500" y="175" width="8" height="8"/><rect x="282.500" y="175" width="8" height="8"/><rect x="4.500" y="347" width="8" height="8"/><rect x="143.500" y="347" width="8" height="8"/><rect x="282.500" y="347" width="8" height="8"/></g></svg>
        </div>
      </div>
    </div>
  </section>

  <!-- Highlight round the submenu entry -->
  <div class="absolute left-[836px] top-[486px] h-[54px] w-[299px] rounded-[10px] border-[6px] border-[#ff0000]"></div>

  <!-- Transition arrow -->
  <svg class="absolute left-[1066px] top-[226px] h-[118px] w-[190px] drop-shadow-[2px_3px_2px_rgba(0,0,0,0.5)]" viewBox="0 0 190 118">
    <path d="M4 32H128V5L181 58 128 111V84H4L31 58z" fill="url(#orange)" stroke="#c8681a"/>
    <path d="M5 32H128L134 42H16z" fill="url(#topLight)"/>
    <path d="M128 5L181 58 166 57 134 25z" fill="#ffb45e" opacity=".6"/>
    <path d="M181 58L128 111V100L166 59z" fill="#b85f14" opacity=".75"/>
    <path d="M4 84L31 58H42L22 80z" fill="#ffae58" opacity=".7"/>
    <path d="M4 84l8-4H128v4z" fill="#b8631a" opacity=".7"/>
  </svg>
</main>
</body>
</html>
